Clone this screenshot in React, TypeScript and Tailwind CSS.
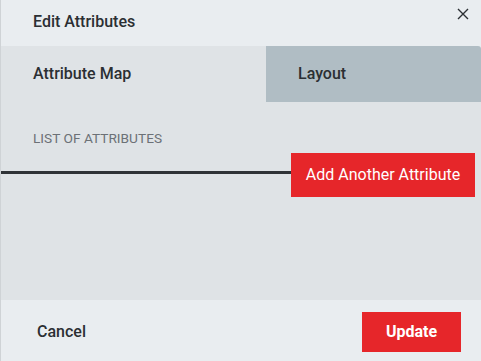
export default function App() {
  return (
    <div
      className="w-[481px] h-[361px] flex flex-col border-l border-[#cfd3d6] bg-[#e9edf0] overflow-hidden"
      style={{ fontFamily: "Roboto, 'Liberation Sans', sans-serif" }}
    >
      {/* header */}
      <div className="h-[46px] flex items-center justify-between pl-[32px] pr-[12px] pb-[2px] bg-[#e9edf0]">
        <h2 className="text-[16px] font-medium text-[#2b2f33]">Edit Attributes</h2>
        <button className="text-[#2b2f33] -mt-[16px]" aria-label="Close">
          <svg width="12" height="12" viewBox="0 0 12 12" fill="none" stroke="currentColor" strokeWidth="1.4">
            <path d="M1 1L11 11M11 1L1 11" />
          </svg>
        </button>
      </div>

      {/* tabs */}
      <div className="h-[56px] flex">
        <button className="w-[265px] h-full bg-[#dfe3e6] text-left pl-[32px] text-[16px] font-medium text-[#2b2f33]">
          Attribute Map
        </button>
        <button className="flex-1 h-full bg-[#b0bdc4] rounded-tr-[3px] text-left pl-[32px] text-[16px] font-medium text-[#2b2f33]">
          Layout
        </button>
      </div>

      {/* body */}
      <div className="flex-1 bg-[#dfe3e6] pt-[28px]">
        <p className="pl-[32px] text-[13.7px] leading-[16px] text-[#6c7176]">LIST OF ATTRIBUTES</p>
        <div className="mt-[7px] flex items-start pr-[6px]">
          <div className="flex-1 h-[3px] mt-[18px] bg-[#2f3337]" />
          <button className="w-[184px] h-[44px] bg-[#e6262a] text-white text-[16px]">
            Add Another Attribute
          </button>
        </div>
      </div>

      {/* footer */}
      <div className="h-[61px] flex items-center justify-between pl-[36px] pr-[20px] pt-[3px] bg-[#e9edf0]">
        <button className="text-[16px] font-medium text-[#2b2f33]">Cancel</button>
        <button className="w-[99px] h-[40px] bg-[#e6262a] text-white text-[16px] font-bold">
          Update
        </button>
      </div>
    </div>
  );
}
